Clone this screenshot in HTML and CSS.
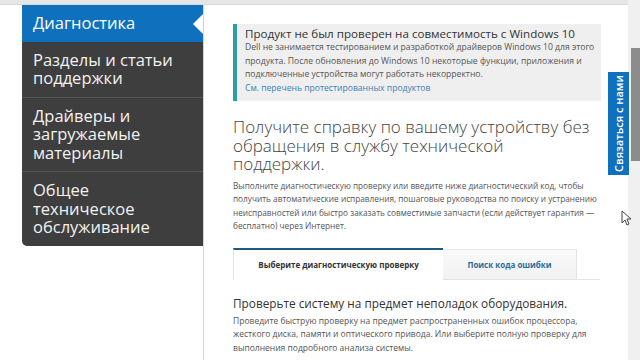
FILE: index.html
```html
<!DOCTYPE html>
<html lang="ru">
<head>
    <meta charset="UTF-8">
    <meta name="viewport" content="width=device-width, initial-scale=1.0">
    <title>Диагностика</title>
    <link rel="stylesheet" href="styles.css">
</head>
<body>
    <div class="topbar"></div>

    <div class="page">
        <nav class="sidebar">
            <a class="nav-item active" href="#">Диагностика</a>
            <a class="nav-item" href="#">Разделы и статьи поддержки</a>
            <a class="nav-item" href="#">Драйверы и загружаемые материалы</a>
            <a class="nav-item" href="#">Общее техническое обслуживание</a>
        </nav>

        <main class="content">
            <div class="notice">
                <div class="notice-title">Продукт не был проверен на совместимость с Windows 10</div>
                <p class="notice-text">Dell не занимается тестированием и разработкой драйверов Windows 10 для этого продукта. После обновления до Windows 10 некоторые функции, приложения и подключенные устройства могут работать некорректно.</p>
                <a class="notice-link" href="#">См. перечень протестированных продуктов</a>
            </div>

            <h1 class="headline">Получите справку по вашему устройству без обращения в службу технической поддержки.</h1>
            <p class="intro intro-top">Выполните диагностическую проверку или введите ниже диагностический код, чтобы получить автоматические исправления, пошаговые руководства по поиску и устранению неисправностей или быстро заказать совместимые запчасти (если действует гарантия — бесплатно) через Интернет.</p>

            <div class="tabs">
                <div class="tab active">Выберите диагностическую проверку</div>
                <div class="tab">Поиск кода ошибки</div>
            </div>

            <h2 class="subhead">Проверьте систему на предмет неполадок оборудования.</h2>
            <p class="intro">Проведите быструю проверку на предмет распространенных ошибок процессора, жесткого диска, памяти и оптического привода. Или выберите полную проверку для выполнения подробного анализа системы.</p>
        </main>

        <div class="scrollbar"><div class="thumb"></div></div>
    </div>

    <a class="contact-tab" href="#"><span>Связаться с нами</span></a>

    <svg class="cursor" width="10" height="16" viewBox="0 0 10 16">
        <path d="M1 1 L1 13 L4 10 L6 15 L8 14 L6 9 L10 9 Z" fill="#fff" stroke="#444" stroke-width="1"/>
    </svg>
</body>
</html>
```

FILE: styles.css
```css
body {
    margin: 0;
    background: #fff;
    font-family: "Open Sans", "Noto Sans", sans-serif;
    overflow: hidden;
}

.topbar {
    height: 4px;
    width: 628px;
    background: #e6e6e6;
    border-bottom: 1px solid #dadada;
}

.page {
    display: flex;
    height: 355px;
}

/* левое меню */
.sidebar {
    margin-left: 22px;
    width: 181px;
    align-self: flex-start;
    display: flex;
    flex-direction: column;
    background: #3e3e3e;
    border-bottom-left-radius: 5px;
}

.nav-item {
    position: relative;
    display: block;
    padding: 9px 12px 9px 11px;
    font-size: 16.5px;
    line-height: 18.5px;
    color: #f2f2f2;
    text-decoration: none;
    border-bottom: 1px solid #555;
}

.nav-item:last-child {
    border-bottom: none;
}

.nav-item.active {
    background: #0f71bd;
    color: #fff;
    border-bottom: none;
}

.nav-item.active::after {
    content: "";
    position: absolute;
    right: 0;
    top: 9px;
    border-right: 10px solid #fff;
    border-top: 10px solid transparent;
    border-bottom: 10px solid transparent;
}

/* основная колонка */
.content {
    width: 395px;
    border-left: 1px solid #d4d4d4;
    padding: 19px 0 0 29px;
}

.notice {
    width: 356px;
    background: #efefef;
    border-left: 4px solid #2f9ba3;
    padding: 3px 0 6px 8px;
}

.notice-title {
    font-size: 11.6px;
    line-height: 14px;
    color: #333;
}

.notice-text {
    margin: 0;
    width: 352px;
    font-size: 8.6px;
    line-height: 13.5px;
    color: #555;
}

.notice-link {
    display: block;
    font-size: 8.6px;
    line-height: 13.5px;
    color: #3a7fb6;
    text-decoration: none;
}

.headline {
    margin: 17px 0 0;
    width: 362px;
    font-size: 17px;
    line-height: 18.5px;
    font-weight: 300;
    color: #444;
}

.intro {
    margin: 5px 0 0;
    width: 364px;
    font-size: 8.5px;
    line-height: 13.5px;
    color: #555;
}

.intro-top {
    width: 372px;
    font-size: 8.25px;
}

.tabs {
    display: flex;
    margin-top: 15px;
    width: 367px;
    border-bottom: 1px solid #e4e4e4;
}

.tab {
    height: 29px;
    display: flex;
    align-items: center;
    justify-content: center;
    font-size: 8px;
    font-weight: 700;
    color: #2b6d9c;
    background: linear-gradient(#fafafa, #f1f1f1);
    border-top: 1px solid #e8e8e8;
    border-right: 1px solid #e4e4e4;
    width: 133px;
    margin-bottom: -1px;
    margin-top: 1px;
}

.tab.active {
    width: 209px;
    background: #fff;
    color: #333;
    border-top: 2px solid #1d5a7f;
    border-left: 1px solid #e4e4e4;
    border-right: none;
    margin-top: 0;
    margin-bottom: -1px;
    height: 30px;
}

.subhead {
    margin: 15px 0 0;
    font-size: 11.8px;
    line-height: 16px;
    font-weight: 400;
    color: #333;
}

.subhead + .intro {
    margin-top: 3px;
}

/* полоса прокрутки */
.scrollbar {
    width: 12px;
    background: #f0f0f0;
    margin-top: -5px;
    height: 360px;
    position: relative;
}

.thumb {
    position: absolute;
    right: 0;
    top: 48px;
    width: 9px;
    height: 113px;
    background: #8c8c8c;
}

.contact-tab {
    position: absolute;
    left: 608px;
    top: 72px;
    width: 21px;
    height: 103px;
    background: #0f71bd;
    display: flex;
    align-items: center;
    justify-content: center;
    text-decoration: none;
}

.contact-tab span {
    transform: rotate(-90deg);
    white-space: nowrap;
    font-size: 11px;
    font-weight: 600;
    color: #fff;
}

.cursor {
    position: absolute;
    left: 621px;
    top: 210px;
}
```
